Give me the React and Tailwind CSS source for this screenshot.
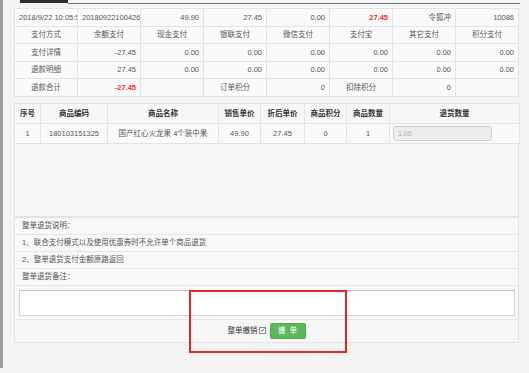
import React from "react";

const R = "right";
const L = "left";
const C = "center";

const summaryRows = [
  [
    { t: "2018/9/22 10:05:55", a: L },
    { t: "201809221004261601", a: L },
    { t: "49.90", a: R },
    { t: "27.45", a: R },
    { t: "0.00", a: R },
    { t: "27.45", a: R, red: true },
    { t: "令狐冲", a: R },
    { t: "10086", a: R },
  ],
  ["支付方式", "余额支付", "现金支付", "银联支付", "微信支付", "支付宝", "其它支付", "积分支付"].map(
    (t) => ({ t, a: C })
  ),
  [
    { t: "支付详情", a: C },
    { t: "-27.45", a: R },
    { t: "0.00", a: R },
    { t: "0.00", a: R },
    { t: "0.00", a: R },
    { t: "0.00", a: R },
    { t: "0.00", a: R },
    { t: "0.00", a: R },
  ],
  [
    { t: "退款明细", a: C },
    { t: "27.45", a: R },
    { t: "0.00", a: R },
    { t: "0.00", a: R },
    { t: "0.00", a: R },
    { t: "0.00", a: R },
    { t: "0.00", a: R },
    { t: "0.00", a: R },
  ],
  [
    { t: "退款合计", a: C },
    { t: "-27.45", a: R, red: true },
    { t: "", a: R },
    { t: "订单积分", a: C },
    { t: "0", a: R },
    { t: "扣除积分", a: C },
    { t: "0", a: R },
    { t: "", a: R },
  ],
];

const rowHeights = ["h-[18px]", "h-[17px]", "h-[18px]", "h-[17px]", "h-[18px]"];

const alignClass = {
  left: "text-left",
  right: "text-right",
  center: "text-center",
};

const productCols = [
  { title: "序号", w: "w-[26px]" },
  { title: "商品编码", w: "w-[67px]" },
  { title: "商品名称", w: "w-[111px]" },
  { title: "销售单价", w: "w-[42px]" },
  { title: "折后单价", w: "w-[44px]" },
  { title: "商品积分", w: "w-[42px]" },
  { title: "商品数量", w: "w-[43px]" },
  { title: "退货数量", w: "w-[130px]" },
];

const productRow = ["1", "180103151325", "国产红心火龙果 4个装中果", "49.90", "27.45", "0", "1"];

const notes = [
  "整单退货说明：",
  "1、联合支付模式以及使用优惠券时不允许单个商品退货",
  "2、整单退货支付金额原路返回",
  "整单退货备注：",
];

export default function App() {
  return (
    <div className="relative flex w-[529px] h-[373px] overflow-hidden bg-[#f3f3f3] font-['Liberation_Sans','Noto_Sans_CJK_SC',sans-serif] text-[7.5px] leading-none text-[#555]">
      {/* left frame edge */}
      <div className="w-[3px] h-[368px] bg-[#9b9b9b]" />

      <div className="flex flex-col w-[526px]">
        {/* tab strip */}
        <div className="flex items-start h-[8px]">
          <div className="w-[17px]" />
          <div className="w-[48px] h-[3px] bg-[#2e2e2e]" />
          <div className="w-[452px] h-[1px] mt-[3px] bg-[#6f6f6f]" />
        </div>

        <div className="pl-[11px]">
          {/* payment summary */}
          <table className="table-fixed w-[505px] border-collapse bg-[#fafafa]">
            <tbody>
              {summaryRows.map((row, i) => (
                <tr key={i} className={rowHeights[i]}>
                  {row.map((c, j) => (
                    <td
                      key={j}
                      className={`border border-[#e3e3e3] px-[4px] overflow-hidden whitespace-nowrap align-middle ${alignClass[c.a]} ${
                        c.red ? "text-[#ff1a1a] font-bold" : ""
                      }`}
                    >
                      {c.t}
                    </td>
                  ))}
                </tr>
              ))}
            </tbody>
          </table>

          {/* product table */}
          <table className="mt-[6px] table-fixed w-[505px] border-collapse bg-[#fafafa]">
            <thead>
              <tr className="h-[20px]">
                {productCols.map((c) => (
                  <th
                    key={c.title}
                    className={`${c.w} border border-[#e3e3e3] text-center align-middle font-bold text-[#333] bg-[#f7f7f7]`}
                  >
                    {c.title}
                  </th>
                ))}
              </tr>
            </thead>
            <tbody>
              <tr className="h-[20px]">
                {productRow.map((t, j) => (
                  <td
                    key={j}
                    className="border border-[#e3e3e3] text-center align-middle whitespace-nowrap overflow-hidden"
                  >
                    {t}
                  </td>
                ))}
                <td className="border border-[#e3e3e3] align-middle pl-[3px]">
                  <div className="flex items-center w-[99px] h-[15px] px-[4px] rounded-[3px] border border-[#cfcfcf] bg-[#ededed] text-[7px] text-[#aaa]">
                    1.00
                  </div>
                </td>
              </tr>
            </tbody>
          </table>

          {/* blank panel area */}
          <div className="w-[505px] h-[72px] border-x border-[#e3e3e3] bg-[#f6f6f6]" />

          {/* refund notes */}
          <div className="w-[505px] border-t-2 border-x border-[#e3e3e3] bg-[#f8f8f8]">
            {notes.map((n) => (
              <div
                key={n}
                className="flex items-center h-[17px] pl-[7px] border-b border-[#e6e6e6] text-[#555]"
              >
                {n}
              </div>
            ))}

            <div className="pt-[4px] pb-[3px] pl-[4px] pr-[3px] border-b border-[#e6e6e6]">
              <textarea
                className="block w-full h-[26px] resize-none bg-white border border-[#d4d4d4] border-t-[#bdbdbd] rounded-[1px] outline-none"
                defaultValue=""
              />
            </div>

            <div className="flex items-center justify-center gap-[4px] h-[23px] border-b border-[#e6e6e6] bg-[#f6f6f6]">
              <div className="flex items-center gap-[1px]">
                <span className="text-[#333]">整单撤销</span>
                <span className="relative -top-[1px] flex items-center justify-center w-[7px] h-[7px] border border-[#8a8a8a] bg-white">
                  <svg viewBox="0 0 10 10" className="w-[6px] h-[6px]">
                    <path d="M1.5 5.2 L4 7.8 L8.8 2" fill="none" stroke="#2f4fb8" strokeWidth="1.6" />
                  </svg>
                </span>
              </div>
              <button className="w-[36px] h-[16px] rounded-[2px] bg-[#5cb85c] border border-[#4cae4c] text-white text-[7.5px]">
                撤&nbsp;&nbsp;单
              </button>
            </div>
          </div>
        </div>
      </div>

      {/* red annotation frame */}
      <div className="absolute left-[189px] top-[290px] w-[158px] h-[63px] border-2 border-[#ee2424]" />
    </div>
  );
}
